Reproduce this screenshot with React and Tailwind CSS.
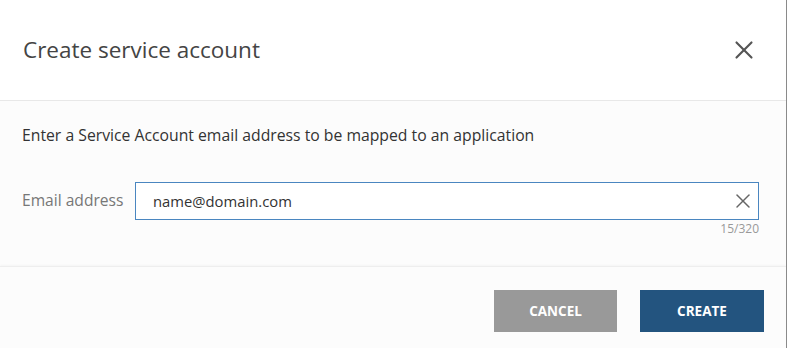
import { X } from 'lucide-react';

export default function App() {
  return (
    <div
      className="w-[787px] h-[348px] bg-[#fcfcfc] text-[#333] overflow-hidden flex"
      style={{ fontFamily: '"Open Sans", "Noto Sans", sans-serif' }}
    >
      <div className="w-[786px] flex flex-col">
        {/* Header */}
        <div className="h-[101px] bg-white border-b border-[#e8e8e8] flex items-center justify-between pl-[23px] pr-[27px]">
          <h1 className="text-[22.5px] text-[#444] font-normal leading-none">Create service account</h1>
          <button className="text-[#555]">
            <X size={30} strokeWidth={1.7} />
          </button>
        </div>

        {/* Body */}
        <div className="pl-[22px] pr-[27px] pt-[23px] h-[165px]">
          <p className="text-[15.75px] leading-[22px] text-[#333]">
            Enter a Service Account email address to be mapped to an application
          </p>
          <div className="flex items-center mt-[36px]">
            <label className="text-[15.6px] text-[#777] w-[113px]">Email address</label>
            <div className="flex-1 h-[38px] border border-[#4a86c0] bg-white flex items-center pl-[17px] pr-[3px]">
              <span className="flex-1 text-[14.8px] text-[#333]">name@domain.com</span>
              <X size={24} strokeWidth={1.5} className="text-[#666]" />
            </div>
          </div>
          <div className="text-right text-[12px] text-[#999] mt-[3px] leading-none">15/320</div>
        </div>

        {/* Footer */}
        <div className="flex-1 border-t border-[#eeeeee] shadow-[0_-1px_2px_rgba(0,0,0,0.03)] flex justify-end items-start gap-[23px] pt-[23px] pr-[22px]">
          <button className="w-[123px] h-[42px] bg-[#999999] text-white text-[13.5px] font-bold">CANCEL</button>
          <button className="w-[124px] h-[42px] bg-[#23547f] text-white text-[13.5px] font-bold">CREATE</button>
        </div>
      </div>
      <div className="w-px bg-[#8a8a8a]" />
    </div>
  );
}
